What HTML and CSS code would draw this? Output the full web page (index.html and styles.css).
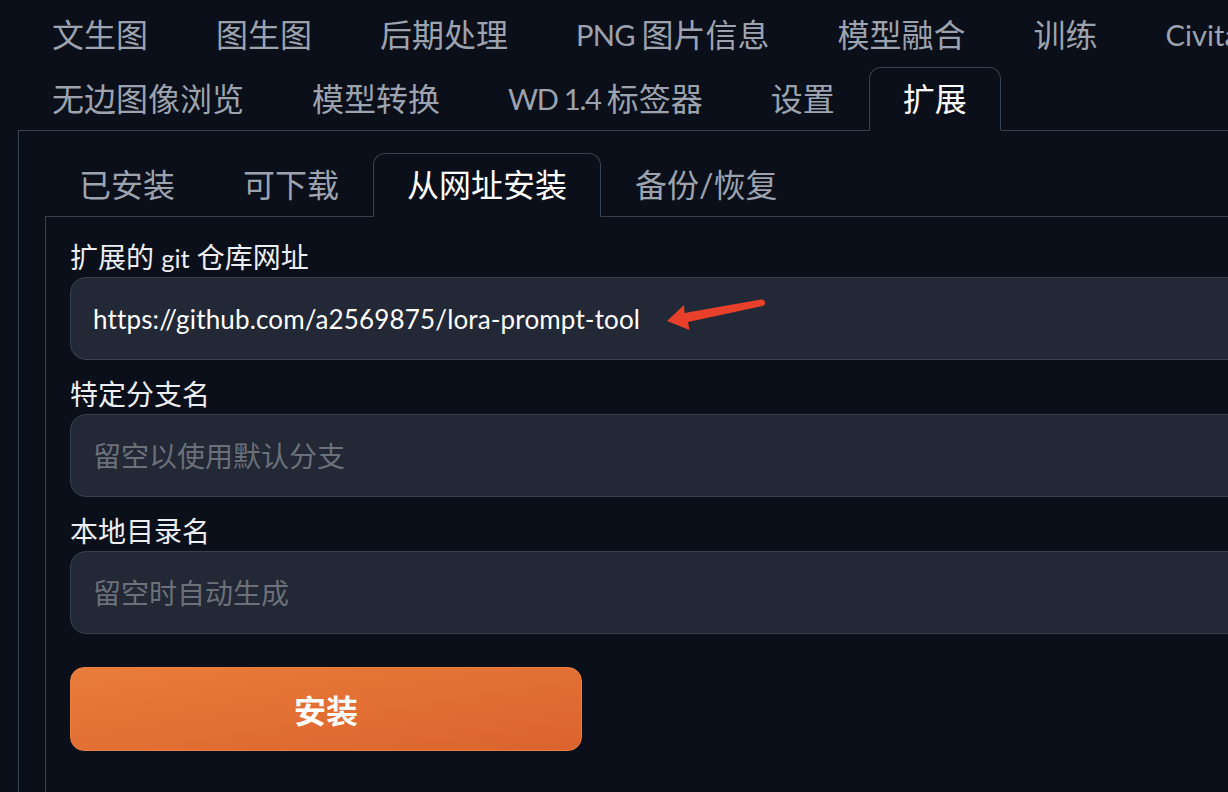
FILE: index.html
```html
<!DOCTYPE html>
<html lang="zh-CN">
<head>
<meta charset="utf-8">
<title>扩展 - 从网址安装</title>
<link rel="stylesheet" href="styles.css">
</head>
<body>
<div class="app">
  <nav class="main-tabs">
    <div class="tab">文生图</div>
    <div class="tab">图生图</div>
    <div class="tab">后期处理</div>
    <div class="tab"><span class="latin tight">PNG </span>图片信息</div>
    <div class="tab">模型融合</div>
    <div class="tab">训练</div>
    <div class="tab"><span class="latin">Civitai Helper</span></div>
    <div class="tab">无边图像浏览</div>
    <div class="tab">模型转换</div>
    <div class="tab"><span class="latin tighter">WD 1.4 </span>标签器</div>
    <div class="tab">设置</div>
    <div class="tab selected">扩展</div>
  </nav>
  <section class="outer-panel">
    <nav class="sub-tabs">
      <div class="tab">已安装</div>
      <div class="tab">可下载</div>
      <div class="tab selected">从网址安装</div>
      <div class="tab">备份/恢复</div>
    </nav>
    <div class="inner-panel">
      <div class="field">
        <label class="field-label">扩展的 <span class="latin">git</span> 仓库网址</label>
        <div class="input-wrap">
          <input class="text-input url-input" type="text" value="https://github.com/a2569875/lora-prompt-tool">
          <svg class="arrow" width="110" height="40" viewBox="0 0 110 40">
            <path d="M2 24 L19 8 L19.5 16 L96 2.6 A3.2 3.2 0 0 1 97.5 9 L23 25 L24.5 33 Z" fill="#e8402a"/>
          </svg>
        </div>
      </div>
      <div class="field">
        <label class="field-label">特定分支名</label>
        <div class="input-wrap">
          <input class="text-input" type="text" placeholder="留空以使用默认分支">
        </div>
      </div>
      <div class="field">
        <label class="field-label">本地目录名</label>
        <div class="input-wrap">
          <input class="text-input" type="text" placeholder="留空时自动生成">
        </div>
      </div>
      <button class="install-btn" type="button">安装</button>
    </div>
  </section>
</div>
</body>
</html>
```

FILE: styles.css
```css
html, body {
  margin: 0;
  padding: 0;
  background: #0b0f19;
  overflow: hidden;
}

body {
  font-family: Lato, "Noto Sans CJK SC", sans-serif;
  color: #e5e7eb;
}

.app {
  padding: 3px 0 0 18px;
  width: 1560px;
}

.main-tabs,
.sub-tabs {
  display: flex;
  flex-wrap: wrap;
  position: relative;
  z-index: 1;
  margin-bottom: -1px;
}

.main-tabs {
  width: 1480px;
}

.tab {
  box-sizing: border-box;
  height: 64px;
  padding: 0 33px;
  border: 1px solid transparent;
  display: flex;
  align-items: center;
  font-size: 32px;
  line-height: 1;
  color: #9ca3af;
  white-space: pre;
}

.tab.selected {
  border-color: #374151;
  border-bottom-color: #0b0f19;
  border-radius: 12px 12px 0 0;
  background: #0b0f19;
  color: #ffffff;
}

.latin {
  font-size: 0.91em;
}

.latin.tight {
  letter-spacing: -0.75px;
}

.latin.tighter {
  letter-spacing: -1.3px;
}

.outer-panel {
  border: 1px solid #374151;
  padding: 22px 0 0 26px;
  min-height: 900px;
}

.inner-panel {
  border: 1px solid #374151;
  padding: 20px 0 0 24px;
  min-height: 800px;
  display: flex;
  flex-direction: column;
}

.field {
  display: flex;
  flex-direction: column;
  margin-bottom: 14px;
}

.field-label {
  font-size: 28px;
  line-height: 40px;
  height: 40px;
  color: #eceef1;
}

.input-wrap {
  position: relative;
}

.text-input {
  box-sizing: border-box;
  width: 1400px;
  height: 83px;
  padding: 0 22px;
  border: 1px solid #374151;
  border-radius: 16px;
  background: #222836;
  font-family: Lato, "Noto Sans CJK SC", sans-serif;
  font-size: 28px;
  color: #ffffff;
  outline: none;
}

.url-input {
  font-size: 26px;
  letter-spacing: 0.15px;
}

.text-input::placeholder {
  color: #6b7079;
}

.arrow {
  position: absolute;
  left: 595px;
  top: 20px;
}

.install-btn {
  box-sizing: border-box;
  margin-top: 19px;
  width: 512px;
  height: 84px;
  border: 1px solid #ec8040;
  border-radius: 14px;
  background: linear-gradient(to bottom right, #e97c3a, #db632e);
  color: #ffffff;
  font-family: Lato, "Noto Sans CJK SC", sans-serif;
  font-size: 32px;
  font-weight: 700;
  cursor: pointer;
}
```
